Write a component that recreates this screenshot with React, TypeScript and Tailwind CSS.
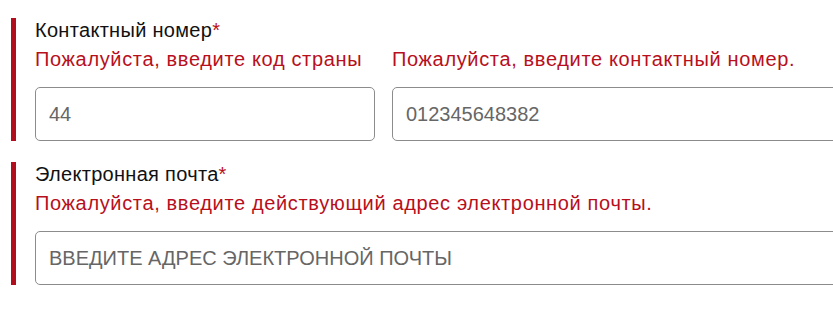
const labelFont = { fontFamily: '"Liberation Sans", Arial, sans-serif' };

function Field({
  label,
  errors,
  children,
}: {
  label: string;
  errors: { text: string; width?: string }[];
  children: React.ReactNode;
}) {
  return (
    <section className="ml-[11px] border-l-[5px] border-[#b10f1e] pl-[19px]">
      <label className="block text-[20px] leading-[24px] tracking-[0.3px] text-[#111]">
        {label}
        <span className="text-[#b80f1c]">*</span>
      </label>
      <div className="mt-[5px] flex gap-[17px] text-[20px] leading-[24px] tracking-[0.65px] text-[#b80f1c]">
        {errors.map((e) => (
          <p key={e.text} className={e.width ?? 'flex-1'}>
            {e.text}
          </p>
        ))}
      </div>
      <div className="mt-[16px] flex gap-[17px]">{children}</div>
    </section>
  );
}

const inputCls =
  'h-[54px] rounded-[5px] border border-[#8c8c8c] bg-white pl-[13px] text-[20px] text-[#666] placeholder:text-[#666] outline-none';

export default function App() {
  return (
    <div className="min-h-screen w-full overflow-hidden bg-white" style={labelFont}>
      <div className="w-[1100px] pt-[18px]">
        <Field
          label="Контактный номер"
          errors={[
            { text: 'Пожалуйста, введите код страны', width: 'w-[340px] shrink-0' },
            { text: 'Пожалуйста, введите контактный номер.' },
          ]}
        >
          <input className={`${inputCls} w-[340px] shrink-0`} defaultValue="44" />
          <input className={`${inputCls} flex-1`} defaultValue="012345648382" />
        </Field>
        <div className="h-[21px]" />
        <Field
          label="Электронная почта"
          errors={[{ text: 'Пожалуйста, введите действующий адрес электронной почты.' }]}
        >
          <input className={`${inputCls} flex-1`} placeholder="ВВЕДИТЕ АДРЕС ЭЛЕКТРОННОЙ ПОЧТЫ" />
        </Field>
      </div>
    </div>
  );
}
